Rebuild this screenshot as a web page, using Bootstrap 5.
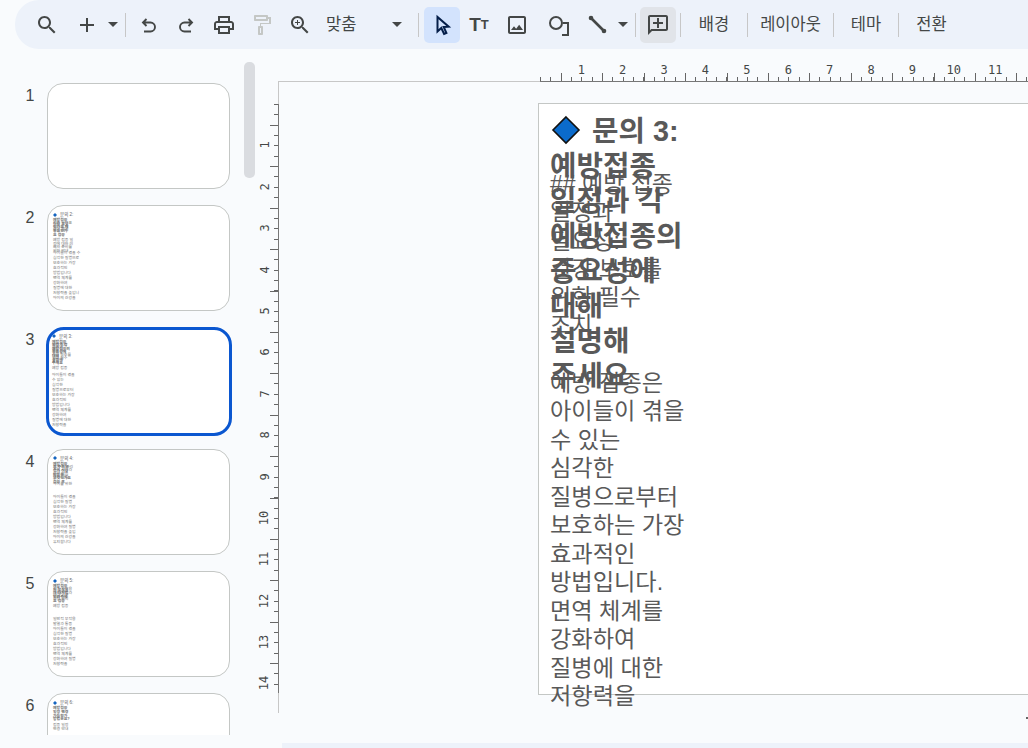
<!DOCTYPE html>
<html lang="ko">
<head>
<meta charset="utf-8">
<title>Slides</title>
<link href="https://cdn.jsdelivr.net/npm/bootstrap@5.3.0/dist/css/bootstrap.min.css" rel="stylesheet">
<style>
html,body{height:748px;overflow:hidden;background:#f9fbfd;margin:0}
body{font-family:"Liberation Sans","Noto Sans CJK KR",sans-serif;color:#444746}
.tbar{height:49px;margin-left:15px;padding-left:13px;background:#edf2fa;border-radius:24px 0 0 24px}
.tbtn{width:38px;height:36px;flex:none}
.tbtn svg{width:24px;height:24px;fill:#444746}
.tplus{margin-left:2px}
.tcaret{width:14px;height:36px;flex:none}
.tcaret i{display:block;width:0;height:0;border:5px solid transparent;border-top-color:#444746;border-bottom:0}
.tsep{width:1px;height:24px;background:#c7c7c7;flex:none;margin:0 3px 0 5px}
.tzoom{width:91px;height:36px;padding-left:7px;font-size:16.5px;flex:none}
.tzoom i{display:block;width:0;height:0;border:5px solid transparent;border-top-color:#444746;border-bottom:0;margin-right:8px}
.sep-zoom{margin:0 5px 0 8px}
.tactive{background:#d3e3fd;border-radius:5px;width:36px}
.tcomment{background:#e1e4e9;border-radius:5px;width:36px;margin-left:1px}
.tword{font-size:16.5px;flex:none;text-align:center;white-space:nowrap}
.w-bg{width:66px}.w-ly{width:85px}.w-th{width:64px}.w-tr{width:65px}
.ttxt{font-weight:700;font-size:19px;line-height:1;color:#444746}
.ttxt small{font-size:13px;font-weight:700}
.mainarea{height:681px;margin-top:13px}
.filmstrip{width:256px;height:673px;flex:none;overflow:hidden;position:relative;padding-top:21px}
.sbar{position:absolute;left:244px;top:0;width:11px;height:116px;background:#dadce0;border-radius:5px}
.thumbrow{height:106px;margin-bottom:16.3px;padding-left:47px;position:relative}
.tnum{position:absolute;left:20px;top:3px;width:20px;text-align:center;font-size:16px;line-height:20px;color:#444746}
.tslide{width:183px;height:106px;background:#fff;border:1px solid #c4c7c5;border-radius:16px;position:relative;overflow:hidden}
.tsel{border:3px solid #0b57d0;margin:-1px 0 0 -1px;width:186px;height:109px;border-radius:18px}
.tsel .mini{margin:-2px 0 0 -2px}
.mini{position:absolute;inset:0;font-size:3.9px;color:#707070}
.minih{position:absolute;left:12px;top:6px;font-size:4.5px;line-height:5px;white-space:nowrap;color:#666}
.minih svg{width:4px;height:4px;vertical-align:-.5px;margin:0 3px 0 -7px}
.minia,.minib,.minic{position:absolute;left:5px;white-space:nowrap}
.minia{top:12px;line-height:3.6px;font-weight:700}
.minib{top:15px;line-height:3.4px}
.minic{top:44px;line-height:5px}
.editor{flex:1 1 0;min-width:0;overflow:hidden}
.hruler{height:20px;margin-left:22px;border-bottom:1px solid #c7c7c7;position:relative}
.hticks{position:absolute;left:262px;right:0;bottom:-1px;height:20px;border-bottom:1px solid #777;
 background:
 repeating-linear-gradient(90deg,#666 0 1px,transparent 1px 41.4px) 20.7px 100%/100% 8px no-repeat,
 repeating-linear-gradient(90deg,#666 0 1px,transparent 1px 10.35px) 0 100%/100% 4px no-repeat;
 padding-left:20.6px;font-family:"DejaVu Sans Mono",monospace;font-size:12px;line-height:16px;color:#444746}
.hnum{width:41.4px;flex:none;text-align:center;background:#f9fbfd;background-clip:content-box;padding:0 14px 5px;height:16px;white-space:nowrap}
.hnum span{display:block;margin:0 -8px}
.edbody{height:661px}
.vruler{width:23px;height:631px;flex:none;border-right:1px solid #c7c7c7;position:relative}
.vticks{position:absolute;left:0;right:-1px;top:22px;height:589px;border-right:1px solid #777;
 background:
 repeating-linear-gradient(180deg,#666 0 1px,transparent 1px 41.4px) 100% 20.7px/8px 100% no-repeat,
 repeating-linear-gradient(180deg,#666 0 1px,transparent 1px 10.35px) 100% 0/4px 100% no-repeat;
 padding-top:20.7px;font-family:"DejaVu Sans Mono",monospace;font-size:12px;color:#444746}
.vnum{height:41.4px;width:22px;position:relative}
.vnum span{display:block;background:#f9fbfd;line-height:12px;padding:2px 0;transform:rotate(-90deg);white-space:nowrap;margin-right:5px}
.slidewrap{margin:21px 0 0 259px;width:600px;height:592px;flex:none;background:#fff;border:1px solid #c4c7c5;position:relative;color:#595959}
.stxt{position:absolute;left:11px;white-space:nowrap}
.shead{top:10px;font-size:28.8px;line-height:35px;font-weight:700}
.shead svg{width:30px;height:30px;vertical-align:-4px;margin:0 11px 0 1px}
.ssub{top:66px;font-size:23px;line-height:28.3px}
.sbody{top:265px;font-size:23.2px;line-height:28.45px}
.botstrip{height:5px;margin-left:282px;background:#edf2fa}
.edgemark{position:absolute;left:1026px;top:717px;width:2px;height:2px;background:#666}
</style>
</head>
<body>
<div class="tbar d-flex align-items-center">
  <div class="tbtn d-flex align-items-center justify-content-center"><svg viewBox="0 0 24 24"><path d="M15.5 14h-.79l-.28-.27C15.41 12.59 16 11.11 16 9.5 16 5.91 13.09 3 9.5 3S3 5.91 3 9.5 5.91 16 9.5 16c1.61 0 3.09-.59 4.23-1.57l.27.28v.79l5 4.99L20.49 19l-4.99-5zm-6 0C7.01 14 5 11.99 5 9.5S7.01 5 9.5 5 14 7.01 14 9.5 11.99 14 9.5 14z"/></svg></div>
  <div class="tbtn tplus d-flex align-items-center justify-content-center"><svg viewBox="0 0 24 24"><path d="M19 13h-6v6h-2v-6H5v-2h6V5h2v6h6v2z"/></svg></div>
  <div class="tcaret d-flex align-items-center justify-content-center"><i></i></div>
  <div class="tsep"></div>
  <div class="tbtn d-flex align-items-center justify-content-center"><svg viewBox="0 0 24 24"><path d="M10.500 6 7 9.500l3.500 3.500M7.300 9.500H14.500a4.400 4.400 0 0 1 0 9H8" fill="none" stroke="#444746" stroke-width="1.900"/></svg></div>
  <div class="tbtn d-flex align-items-center justify-content-center"><svg viewBox="0 0 24 24"><path d="M14.500 6 18 9.500l-3.500 3.500M17.700 9.500H10.500a4.400 4.400 0 0 0 0 9H17" fill="none" stroke="#444746" stroke-width="1.900"/></svg></div>
  <div class="tbtn d-flex align-items-center justify-content-center"><svg viewBox="0 0 24 24"><path d="M19 8h-1V3H6v5H5c-1.660 0-3 1.340-3 3v6h4v4h12v-4h4v-6c0-1.660-1.340-3-3-3zM8 5h8v3H8V5zm8 12v2H8v-4h8v2zm2-2v-2H6v2H4v-4c0-.55.45-1 1-1h14c.55 0 1 .45 1 1v4h-2z"/></svg></div>
  <div class="tbtn d-flex align-items-center justify-content-center"><svg viewBox="0 0 24 24"><path d="M18 4V3c0-.55-.45-1-1-1H5c-.55 0-1 .45-1 1v4c0 .55.45 1 1 1h12c.55 0 1-.45 1-1V6h1v4H10v3H9c-.55 0-1 .45-1 1v7c0 .55.45 1 1 1h3c.55 0 1-.45 1-1v-7c0-.55-.45-1-1-1h-1v-2h10V4h-3zm-2 2H6V4h10v2zm-5 9v5h-1v-5h1z" fill="#c4c7c5"/></svg></div>
  <div class="tbtn d-flex align-items-center justify-content-center"><svg viewBox="0 0 24 24"><path d="M15.500 14h-.79l-.28-.27C15.410 12.590 16 11.110 16 9.500 16 5.910 13.090 3 9.500 3S3 5.910 3 9.500 5.910 16 9.500 16c1.610 0 3.090-.59 4.230-1.570l.27.28v.79l5 4.990L20.490 19l-4.990-5zm-6 0C7.010 14 5 11.990 5 9.500S7.010 5 9.500 5 14 7.010 14 9.500 11.990 14 9.500 14z"/><path d="M12 10h-2v2H9v-2H7V9h2V7h1v2h2v1z"/></svg></div>
  <div class="tzoom d-flex align-items-center justify-content-between"><span>맞춤</span><i></i></div>
  <div class="tsep sep-zoom"></div>
  <div class="tbtn tactive d-flex align-items-center justify-content-center"><svg viewBox="0 0 24 24"><path d="M7.500 4v14.500l3.800-3.500 2.800 6 2.300-1-2.700-6 5-.3z" fill="#d3e3fd" stroke="#041e49" stroke-width="2"/></svg></div>
  <div class="tbtn d-flex align-items-center justify-content-center ttxt">T<small>T</small></div>
  <div class="tbtn d-flex align-items-center justify-content-center"><svg viewBox="0 0 24 24"><path d="M19 5v14H5V5h14m0-2H5c-1.100 0-2 .9-2 2v14c0 1.100.9 2 2 2h14c1.100 0 2-.9 2-2V5c0-1.100-.9-2-2-2zm-4.860 8.860-3 3.870L9 13.140 6 17h12l-3.860-5.140z"/></svg></div>
  <div class="tbtn ms-1 d-flex align-items-center justify-content-center"><svg viewBox="0 0 24 24"><circle cx="9" cy="10" r="6" fill="none" stroke="#444746" stroke-width="2"/><path d="M16 10h5v12h-6" fill="none" stroke="#444746" stroke-width="2"/></svg></div>
  <div class="tbtn d-flex align-items-center justify-content-center"><svg viewBox="0 0 24 24"><path d="M6 5 19 18" stroke="#444746" stroke-width="2.600"/><circle cx="6" cy="5" r="2.300"/><circle cx="19" cy="18" r="2.300"/></svg></div>
  <div class="tcaret d-flex align-items-center justify-content-center"><i></i></div>
  <div class="tsep"></div>
  <div class="tbtn tcomment d-flex align-items-center justify-content-center"><svg viewBox="0 0 24 24"><path d="M20 2H4c-1.100 0-2 .9-2 2v18l4-4h14c1.100 0 2-.9 2-2V4c0-1.100-.9-2-2-2zm0 14H5.200L4 17.200V4h16v12z"/><path d="M13 5h-2v4H7v2h4v4h2v-4h4V9h-4z"/></svg></div>
  <div class="tsep ms-1 me-0"></div>
  <div class="tword w-bg">배경</div>
  <div class="tsep m-0"></div>
  <div class="tword w-ly">레이아웃</div>
  <div class="tsep m-0"></div>
  <div class="tword w-th">테마</div>
  <div class="tsep m-0"></div>
  <div class="tword w-tr">전환</div>
</div>

<div class="mainarea d-flex">
  <div class="filmstrip">
    <div class="sbar"></div>
    <div class="thumbrow"><div class="tnum">1</div><div class="tslide"></div></div>
    <div class="thumbrow"><div class="tnum">2</div><div class="tslide"><div class="mini">
      <div class="minih"><svg viewBox="0 0 10 10"><path d="M5 0 10 5 5 10 0 5z" fill="#1565c0"/></svg>문의 2:</div>
      <div class="minia">예방접종<br>이란 무엇<br>인가요 왜<br>중요한가<br>요 접종</div>
      <div class="minib">접종 일정표<br>건강 유지<br>면역 체계<br><br><br>예방 접종 일<br>정에 대한 이<br>해와 준비를<br>위한 안내</div>
      <div class="minic">아이들이 겪을 수<br>심각한 질병으로<br>보호하는 가장<br>효과적인<br>방법입니다<br>면역 체계를<br>강화하여<br>질병에 대한<br>저항력을 높입니<br>아이의 건강을</div>
    </div></div></div>
    <div class="thumbrow"><div class="tnum">3</div><div class="tslide tsel"><div class="mini">
      <div class="minih"><svg viewBox="0 0 10 10"><path d="M5 0 10 5 5 10 0 5z" fill="#1565c0"/></svg>문의 3:</div>
      <div class="minia">예방접종<br>일정과 각<br>예방접종의<br>중요성에<br>대해<br>설명해<br>주세요</div>
      <div class="minib">예방 접종<br>일정과<br>필요성:<br>건강 보호를<br>위한 필수<br>조치<br><br>예방 접종</div>
      <div class="minic">아이들이 겪을<br>수 있는<br>심각한<br>질병으로부터<br>보호하는 가장<br>효과적인<br>방법입니다<br>면역 체계를<br>강화하여<br>질병에 대한<br>저항력을</div>
    </div></div></div>
    <div class="thumbrow"><div class="tnum">4</div><div class="tslide"><div class="mini">
      <div class="minih"><svg viewBox="0 0 10 10"><path d="M5 0 10 5 5 10 0 5z" fill="#1565c0"/></svg>문의 4:</div>
      <div class="minia">예방접종<br>후 주의할<br>점과 이상<br>반응은<br>무엇인가요<br>접종 후</div>
      <div class="minib">접종 후 관리<br>주의 사항과<br>이상 반응<br>대처 방법<br><br>아이를 위한</div>
      <div class="minic">아이들이 겪을<br>심각한 질병<br>보호하는 가장<br>효과적인<br>방법입니다<br>면역 체계를<br>강화하여 질병<br>저항력을 높입<br>아이의 건강을<br>유지합니다</div>
    </div></div></div>
    <div class="thumbrow"><div class="tnum">5</div><div class="tslide"><div class="mini">
      <div class="minih"><svg viewBox="0 0 10 10"><path d="M5 0 10 5 5 10 0 5z" fill="#1565c0"/></svg>문의 5:</div>
      <div class="minia">예방접종<br>의 부작용<br>과 대처법<br>알려주세<br>요 접종</div>
      <div class="minib">접종 부작용<br>대처 방법과<br>안내 사항<br>건강 관리<br><br>예방 접종</div>
      <div class="minic">일반적 부작용<br>발열과 통증<br>아이들이 겪을<br>심각한 질병<br>보호하는 가장<br>효과적인<br>방법입니다<br>면역 체계를<br>강화하여 질병<br>저항력을</div>
    </div></div></div>
    <div class="thumbrow"><div class="tnum">6</div><div class="tslide"><div class="mini">
      <div class="minih"><svg viewBox="0 0 10 10"><path d="M5 0 10 5 5 10 0 5z" fill="#1565c0"/></svg>문의 6:</div>
      <div class="minia">예방접종<br>일정 변경<br>가능한가<br>방법은요?</div>
      <div class="minib"><br><br><br><br>접종 일정<br>변경 안내</div>
    </div></div></div>
  </div>

  <div class="editor">
    <div class="hruler">
      <div class="hticks d-flex">
        <div class="hnum"><span>1</span></div><div class="hnum"><span>2</span></div><div class="hnum"><span>3</span></div><div class="hnum"><span>4</span></div><div class="hnum"><span>5</span></div><div class="hnum"><span>6</span></div><div class="hnum"><span>7</span></div><div class="hnum"><span>8</span></div><div class="hnum"><span>9</span></div><div class="hnum"><span>10</span></div><div class="hnum"><span>11</span></div>
      </div>
    </div>
    <div class="edbody d-flex">
      <div class="vruler">
        <div class="vticks">
          <div class="vnum d-flex align-items-center justify-content-center"><span>1</span></div><div class="vnum d-flex align-items-center justify-content-center"><span>2</span></div><div class="vnum d-flex align-items-center justify-content-center"><span>3</span></div><div class="vnum d-flex align-items-center justify-content-center"><span>4</span></div><div class="vnum d-flex align-items-center justify-content-center"><span>5</span></div><div class="vnum d-flex align-items-center justify-content-center"><span>6</span></div><div class="vnum d-flex align-items-center justify-content-center"><span>7</span></div><div class="vnum d-flex align-items-center justify-content-center"><span>8</span></div><div class="vnum d-flex align-items-center justify-content-center"><span>9</span></div><div class="vnum d-flex align-items-center justify-content-center"><span>10</span></div><div class="vnum d-flex align-items-center justify-content-center"><span>11</span></div><div class="vnum d-flex align-items-center justify-content-center"><span>12</span></div><div class="vnum d-flex align-items-center justify-content-center"><span>13</span></div><div class="vnum d-flex align-items-center justify-content-center"><span>14</span></div>
        </div>
      </div>
      <div class="slidewrap">
        <div class="stxt shead"><svg viewBox="0 0 30 30"><path d="M15 2 28 15 15 28 2 15z" fill="#0b6bcb" stroke="#111" stroke-width="1.600"/></svg>문의 3:<br>예방접종<br>일정과 각<br>예방접종의<br>중요성에<br>대해<br>설명해<br>주세요</div>
        <div class="stxt ssub">## 예방 접종<br>일정과<br>필요성:<br>건강 보호를<br>위한 필수<br>조치</div>
        <div class="stxt sbody">예방 접종은<br>아이들이 겪을<br>수 있는<br>심각한<br>질병으로부터<br>보호하는 가장<br>효과적인<br>방법입니다.<br>면역 체계를<br>강화하여<br>질병에 대한<br>저항력을</div>
      </div>
    </div>
  </div>
</div>
<div class="botstrip"></div>
<div class="edgemark"></div>
<script src="https://cdn.jsdelivr.net/npm/bootstrap@5.3.0/dist/js/bootstrap.bundle.min.js"></script>
</body>
</html>
